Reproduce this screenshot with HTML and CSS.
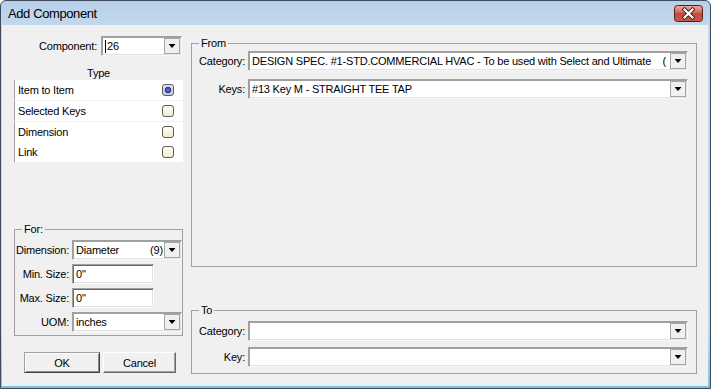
FILE: index.html
```html
<!DOCTYPE html>
<html lang="en">
<head>
  <meta charset="UTF-8">
  <title>Add Component</title>
  <link rel="stylesheet" href="styles.css">
</head>
<body>
  <div class="window">
    <div class="titlebar">
      <span class="title">Add Component</span>
      <span class="close-btn">
        <svg width="29" height="17" viewBox="0 0 29 17">
          <defs>
            <linearGradient id="cg" x1="0" y1="0" x2="0" y2="1">
              <stop offset="0" stop-color="#e8aca2"/>
              <stop offset="0.45" stop-color="#d0675c"/>
              <stop offset="0.5" stop-color="#c44a3c"/>
              <stop offset="1" stop-color="#c35b4d"/>
            </linearGradient>
          </defs>
          <rect x="0.5" y="0.5" width="28" height="16" rx="3" fill="url(#cg)" stroke="#5e1a16"/>
          <path d="M10.5 4.5 L18.5 12.5 M18.5 4.5 L10.5 12.5" stroke="#4a1d1b" stroke-width="4" stroke-linecap="square"/>
          <path d="M10.5 4.5 L18.5 12.5 M18.5 4.5 L10.5 12.5" stroke="#fff" stroke-width="2.2" stroke-linecap="square"/>
        </svg>
      </span>
    </div>

    <div class="client">
      <div class="left">
        <div class="frow comp-row">
          <label class="lbl comp-lbl">Component:</label>
          <div class="field combo comp-combo">
            <span class="value"><span class="caret"></span>26</span>
            <span class="drop"><i></i></span>
          </div>
        </div>

        <div class="type-lbl">Type</div>
        <div class="typelist">
          <div class="tgroup">
            <div class="titem">Item to Item<span class="check on"></span></div>
          </div>
          <div class="tgroup">
            <div class="titem">Selected Keys<span class="check"></span></div>
          </div>
          <div class="tgroup">
            <div class="titem">Dimension<span class="check"></span></div>
            <div class="titem">Link<span class="check"></span></div>
          </div>
        </div>

        <fieldset class="group for-group">
          <legend>For:</legend>
          <div class="frow">
            <label class="lbl">Dimension:</label>
            <div class="field combo wide">
              <span class="value"><span class="dim-name">Diameter</span>(9)</span>
              <span class="drop"><i></i></span>
            </div>
          </div>
          <div class="frow">
            <label class="lbl">Min. Size:</label>
            <div class="field text"><span class="value">0"</span></div>
          </div>
          <div class="frow">
            <label class="lbl">Max. Size:</label>
            <div class="field text"><span class="value">0"</span></div>
          </div>
          <div class="frow">
            <label class="lbl">UOM:</label>
            <div class="field combo wide">
              <span class="value">inches</span>
              <span class="drop"><i></i></span>
            </div>
          </div>
        </fieldset>

        <div class="buttons">
          <button class="btn default">OK</button>
          <button class="btn cancel">Cancel</button>
        </div>
      </div>

      <div class="right">
        <fieldset class="group from-group">
          <legend>From</legend>
          <div class="frow">
            <label class="lbl">Category:</label>
            <div class="field combo long">
              <span class="value">DESIGN SPEC. #1-STD.COMMERCIAL HVAC - To be used with Select and Ultimate    (</span>
              <span class="drop"><i></i></span>
            </div>
          </div>
          <div class="frow">
            <label class="lbl">Keys:</label>
            <div class="field combo long">
              <span class="value">#13 Key M - STRAIGHT TEE TAP</span>
              <span class="drop"><i></i></span>
            </div>
          </div>
        </fieldset>

        <fieldset class="group to-group">
          <legend>To</legend>
          <div class="frow">
            <label class="lbl">Category:</label>
            <div class="field combo long">
              <span class="value"></span>
              <span class="drop"><i></i></span>
            </div>
          </div>
          <div class="frow">
            <label class="lbl">Key:</label>
            <div class="field combo long">
              <span class="value"></span>
              <span class="drop"><i></i></span>
            </div>
          </div>
        </fieldset>
      </div>
    </div>
  </div>
</body>
</html>
```

FILE: styles.css
```css
body {
  margin: 0;
  background: #fff;
  font-family: "Liberation Sans", Arial, sans-serif;
  font-size: 11px;
  letter-spacing: -0.2px;
  color: #000;
}
.window {
  width: 711px;
  height: 389px;
  box-sizing: border-box;
  border: 1px solid #3d4b5b;
  border-radius: 6px 6px 0 0;
  padding: 0 2px 2px 1px;
  background: linear-gradient(#b7cfe9, #c3d8ee 24px, #c1d7ee 85%, #7bbfe9);
  display: flex;
  flex-direction: column;
}
.titlebar {
  height: 24px;
  display: flex;
  justify-content: space-between;
  align-items: flex-start;
  padding: 0 5px 0 6px;
}
.title {
  font-size: 13px;
  letter-spacing: -0.4px;
  line-height: 24px;
  padding-top: 1px;
}
.close-btn {
  margin-top: 4px;
  height: 17px;
}
.client {
  flex: 1;
  background: #f0f0f0;
  display: flex;
  gap: 8px;
  padding: 11px 11px 12px 12px;
}
.left {
  width: 169px;
  display: flex;
  flex-direction: column;
  padding-bottom: 1px;
}
.right {
  width: 506px;
  display: flex;
  flex-direction: column;
}

/* rows and labels */
.frow {
  display: flex;
  align-items: center;
  height: 20px;
}
.lbl {
  text-align: right;
  margin-right: 3px;
  white-space: nowrap;
}
.comp-lbl {
  width: 83px;
  margin-right: 4px;
}

/* sunken input fields */
.field {
  height: 20px;
  box-sizing: border-box;
  background: #fff;
  border: 1px solid;
  border-color: #a0a0a0 #fff #fff #a0a0a0;
  box-shadow: inset 1px 1px #696969, inset -1px -1px #e3e3e3;
  display: flex;
  align-items: center;
  padding: 1px 1px 1px 3px;
}
.combo {
  border-color: #a0a0a0 #f7f7f7 #f7f7f7 #a0a0a0;
  box-shadow: inset 1px 1px #a0a0a0, inset -1px -1px #e3e3e3;
}
.value {
  flex: 1;
  overflow: hidden;
  white-space: pre;
  line-height: 14px;
}
.drop {
  width: 16px;
  height: 16px;
  box-sizing: border-box;
  border: 1px solid #a6a6a6;
  background: #f0f0f0;
  display: flex;
  align-items: center;
  justify-content: center;
}
.drop i {
  width: 7px;
  height: 4px;
  background: #000;
  clip-path: polygon(0 0, 100% 0, 50% 100%);
}
.comp-combo {
  width: 81px;
}
.caret {
  display: inline-block;
  width: 1px;
  height: 13px;
  background: #000;
  vertical-align: -3px;
  margin-right: 1px;
}

/* type list */
.type-lbl {
  margin-top: 10px;
  line-height: 14px;
  text-align: center;
}
.tgroup {
  background: #fff;
  border-left: 1px solid #a0a0a0;
}
.tgroup + .tgroup {
  margin-top: 1px;
}
.titem {
  height: 20px;
  display: flex;
  align-items: center;
  justify-content: space-between;
  padding: 0 9px 0 3px;
}
.check {
  width: 12px;
  height: 12px;
  box-sizing: border-box;
  border: 1px solid #5a5a5a;
  border-radius: 3px;
  background: linear-gradient(#fffdf2, #f3ebcf);
}
.check.on {
  background:
    radial-gradient(circle at 50% 50%, #8d92e6 0, #3d41b6 2px, #30349e 3px, transparent 3.6px),
    linear-gradient(#e4e4ea, #c8c8d2);
}

/* group boxes */
.group {
  margin: 0;
  min-width: 0;
  border: 1px solid #a0a0a0;
}
.group legend {
  padding: 0 2px;
  margin-left: 7px;
  line-height: 14px;
}
.for-group {
  margin-top: auto;
  padding: 4px 0 3px 0;
}
.for-group .frow + .frow {
  margin-top: 4px;
}
.for-group .lbl {
  width: 54px;
}
.wide {
  width: 110px;
}
.text {
  width: 82px;
}
.dim-name {
  display: inline-block;
  width: 74px;
}
.from-group {
  flex: 1;
  padding: 1px 8px 0 0;
}
.from-group .frow + .frow {
  margin-top: 8px;
}
.to-group {
  margin-top: 36px;
  padding: 4px 8px 6px 0;
}
.to-group .frow + .frow {
  margin-top: 6px;
}
.right .lbl {
  width: 53px;
}
.long {
  width: 440px;
}

/* buttons */
.buttons {
  display: flex;
  gap: 3px;
  margin-top: 16px;
  padding-left: 10px;
}
.btn {
  height: 21px;
  width: 76px;
  padding: 0;
  font: inherit;
  letter-spacing: inherit;
  color: #000;
  background: #f0f0f0;
  border: 1px solid;
  border-color: #fff #696969 #696969 #fff;
  box-shadow: inset -1px -1px #a0a0a0;
}
.btn.default {
  border-color: #a0a0a0 #404040 #404040 #a0a0a0;
  box-shadow: inset 1px 1px #fff, inset -1px -1px #8a8a8a;
}
.btn.cancel {
  width: 73px;
}
```
